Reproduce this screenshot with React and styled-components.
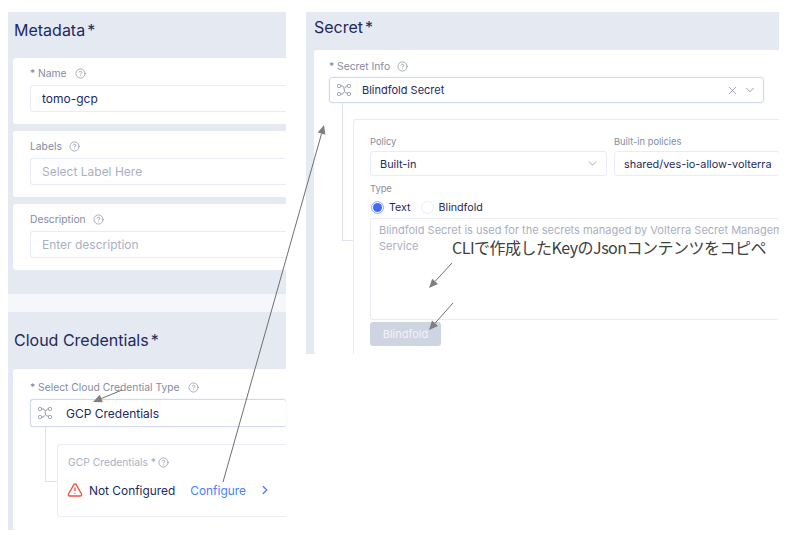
import React from "react";
import styled, { createGlobalStyle } from "styled-components";
import { ChevronDown, ChevronRight, CircleHelp, TriangleAlert, X } from "lucide-react";

const GlobalStyle = createGlobalStyle`
  html, body {
    margin: 0;
    background: #fff;
  }
  body {
    font-family: Inter, "Liberation Sans", sans-serif;
    color: #1f2a5c;
  }
`;

const Page = styled.div`
  position: relative;
  width: 794px;
  height: 545px;
  overflow: hidden;
  display: flex;
  align-items: flex-start;
  gap: 20px;
  padding: 12px 0 0 8px;
  box-sizing: border-box;
`;

const LeftColumn = styled.div`
  width: 278px;
  flex: none;
  display: flex;
  flex-direction: column;
`;

const Section = styled.section`
  background: #e5e9f2;
  padding-left: 5px;
  height: ${(p) => p.$height}px;
  box-sizing: border-box;
  display: flex;
  flex-direction: column;
  gap: 7px;
`;

const Strip = styled.div`
  height: 18px;
  background: #f6f7fa;
`;

const Heading = styled.h2`
  margin: 0 0 ${(p) => p.$bottom}px ${(p) => p.$left || 0}px;
  height: ${(p) => p.$height}px;
  display: flex;
  align-items: center;
  font-size: 16px;
  font-weight: 400;
  flex: none;
  color: #1f2a5c;
`;

const Star = styled.span`
  margin-left: 2px;
`;

const Card = styled.div`
  background: #fff;
  border-radius: 3px 0 0 3px;
  padding: ${(p) => p.$pad || "7px 0 0 17px"};
  height: ${(p) => p.$height}px;
  box-sizing: border-box;
  flex: none;
`;

const Label = styled.div`
  display: flex;
  align-items: center;
  gap: ${(p) => p.$gap || 7}px;
  height: 16px;
  font-size: 10.3px;
  color: #858ca2;
  margin-bottom: ${(p) => p.$bottom ?? 4}px;
`;

const Help = styled(CircleHelp).attrs({ size: 11, strokeWidth: 1.4 })`
  color: #7e859c;
  flex: none;
`;

const Input = styled.div`
  height: 27px;
  box-sizing: border-box;
  border: 1px solid #e9ecf4;
  border-right: none;
  border-radius: 3px 0 0 3px;
  padding-left: 11px;
  display: flex;
  align-items: center;
  font-size: 12px;
  color: ${(p) => (p.$placeholder ? "#a9afc2" : "#1f2a5c")};
`;

const Select = styled.div`
  height: ${(p) => p.$height}px;
  box-sizing: border-box;
  border: 1px solid #d3d9ec;
  border-right: ${(p) => (p.$open ? "none" : "1px solid #d3d9ec")};
  border-radius: 3px;
  width: ${(p) => p.$width}px;
  display: flex;
  align-items: center;
  padding: 0 6px 0 7px;
  font-size: ${(p) => p.$font}px;
  color: #1f2a5c;
  box-shadow: 0 0 2px #e3e6f2;
`;

const SelectText = styled.span`
  margin-left: ${(p) => p.$gap}px;
  flex: 1;
`;

const SelectIcons = styled.span`
  display: flex;
  align-items: center;
  gap: 4px;
  color: #8a90a6;
`;

const Branch = styled.div`
  margin-left: ${(p) => p.$left}px;
  border-left: 1px solid #dfe3f0;
  border-bottom: 1px solid #dfe3f0;
  width: ${(p) => p.$width}px;
  height: ${(p) => p.$height}px;
  box-sizing: border-box;
  flex: none;
`;

const Nested = styled.div`
  display: flex;
  align-items: flex-start;
`;

const SubCard = styled.div`
  flex: 1;
  margin-top: ${(p) => p.$top}px;
  border: 1px solid #e9ecf4;
  border-right: none;
  border-bottom: ${(p) => (p.$open ? "none" : "1px solid #e9ecf4")};
  border-radius: 3px 0 0 3px;
  height: ${(p) => p.$height}px;
  box-sizing: border-box;
  padding: ${(p) => p.$pad};
  min-width: 0;
`;

const MutedLabel = styled.div`
  display: flex;
  align-items: center;
  gap: 2px;
  font-size: 10.3px;
  color: #a9afc2;
  height: 16px;
`;

const StatusRow = styled.div`
  display: flex;
  align-items: center;
  margin-top: 12px;
  font-size: 11.9px;
`;

const WarningIcon = styled(TriangleAlert)`
  margin-left: -1px;
  color: #f0503c;
`;

const StatusText = styled.span`
  margin-left: 6px;
  color: #1f2a5c;
`;

const ConfigureLink = styled.span`
  margin-left: 15px;
  color: #4d7cfe;
`;

const ArrowLink = styled(ChevronRight)`
  margin-left: 12px;
  color: #4d7cfe;
`;

const RightColumn = styled.section`
  width: 473px;
  height: 342px;
  flex: none;
  background: #e5e9f2;
  padding-left: 8px;
  box-sizing: border-box;
  overflow: hidden;
  display: flex;
  flex-direction: column;
`;

const FormGrid = styled.div`
  display: grid;
  grid-template-columns: 237px 1fr;
  column-gap: 7px;
`;

const FieldLabel = styled.div`
  font-size: 9.3px;
  color: #858ca2;
  height: 14px;
  display: flex;
  align-items: center;
  margin: ${(p) => p.$margin || "0 0 3px"};
`;

const FieldBox = styled.div`
  height: 25px;
  box-sizing: border-box;
  border: 1px solid #e9ecf4;
  border-radius: 3px;
  display: flex;
  align-items: center;
  justify-content: space-between;
  padding: 0 7px 0 9px;
  font-size: 10.9px;
  color: #1f2a5c;
  white-space: nowrap;
  overflow: hidden;
`;

const RadioRow = styled.div`
  display: flex;
  align-items: center;
  height: 16px;
  font-size: 10.7px;
  color: #1f2a5c;
`;

const Radio = styled.span`
  width: 13px;
  height: 13px;
  box-sizing: border-box;
  border-radius: 50%;
  border: 1px solid ${(p) => (p.$on ? "#8ea8fb" : "#eceef5")};
  margin: ${(p) => p.$margin};
  display: flex;
  align-items: center;
  justify-content: center;
  &::after {
    content: "";
    width: 9px;
    height: 9px;
    border-radius: 50%;
    background: ${(p) => (p.$on ? "#4368f7" : "transparent")};
  }
`;

const TextArea = styled.div`
  margin-top: 3px;
  height: 102px;
  box-sizing: border-box;
  border: 1px solid #e9ecf4;
  border-right: none;
  border-radius: 3px;
  padding: 3px 0 0 8px;
  font-size: 11px;
  line-height: 16px;
  color: #a9afc2;
  white-space: nowrap;
  overflow: hidden;
`;

const BlindfoldButton = styled.div`
  margin-top: 2px;
  width: 71px;
  height: 24px;
  border-radius: 3px;
  background: #ced4e2;
  color: #f1f3f8;
  font-size: 11px;
  display: flex;
  align-items: center;
  justify-content: center;
`;

const Annotation = styled.div`
  position: absolute;
  left: 452px;
  top: 236px;
  font-family: "Noto Sans CJK JP", sans-serif;
  font-size: 16px;
  line-height: 22px;
  letter-spacing: -0.5px;
  color: #404040;
  white-space: nowrap;
`;

const Arrows = styled.svg`
  position: absolute;
  left: 0;
  top: 0;
  pointer-events: none;
`;

const ShuffleIcon = ({ size = 14 }) => (
  <svg width={size} height={size} viewBox="0 0 14 14" fill="none" stroke="#8a90a6" strokeWidth="1">
    <rect x="0.5" y="1.5" width="3" height="3" rx="1" />
    <rect x="0.5" y="9.5" width="3" height="3" rx="1" />
    <rect x="10.5" y="1.5" width="3" height="3" rx="1" />
    <rect x="10.5" y="9.5" width="3" height="3" rx="1" />
    <path d="M3.5 3h1.5c1.2 0 1.6.7 2 2l.3 2c.3 2 1 3 2.200 3h1M3.500 11h1.500c1 0 1.500-.7 1.900-1.800M8 5c.4-1.200 1-2 2-2h.5" />
  </svg>
);

const Arrow = ({ x1, y1, x2, y2 }) => {
  const angle = Math.atan2(y2 - y1, x2 - x1);
  const len = 9;
  const wing = 4;
  const bx = x2 - len * Math.cos(angle);
  const by = y2 - len * Math.sin(angle);
  const px = wing * Math.sin(angle);
  const py = wing * Math.cos(angle);
  return (
    <g>
      <line x1={x1} y1={y1} x2={bx} y2={by} stroke="#6f6f6f" strokeWidth="1" />
      <polygon points={`${x2},${y2} ${bx + px},${by - py} ${bx - px},${by + py}`} fill="#7f7f7f" />
    </g>
  );
};

export default function App() {
  return (
    <Page>
      <GlobalStyle />
      <LeftColumn>
        <Section $height={282}>
          <Heading $height={36} $bottom={3} $left={1}>
            Metadata<Star>*</Star>
          </Heading>
          <Card $height={66}>
            <Label $gap={8}>
              * Name <Help />
            </Label>
            <Input>tomo-gcp</Input>
          </Card>
          <Card $height={66}>
            <Label>
              Labels <Help />
            </Label>
            <Input $placeholder>Select Label Here</Input>
          </Card>
          <Card $height={66}>
            <Label>
              Description <Help />
            </Label>
            <Input $placeholder>Enter description</Input>
          </Card>
        </Section>
        <Strip />
        <Section $height={218}>
          <Heading $height={55} $bottom={-5} $left={1}>
            Cloud Credentials<Star>*</Star>
          </Heading>
          <Card $height={161} $pad="10px 0 0 17px">
            <Label $gap={8}>
              * Select Cloud Credential Type <Help />
            </Label>
            <Select $open $width={256} $height={28} $font={12}>
              <ShuffleIcon />
              <SelectText $gap={14}>GCP Credentials</SelectText>
            </Select>
            <Nested>
              <Branch $left={15} $width={12} $height={55} />
              <SubCard $top={17} $height={73} $pad="9px 0 0 10px">
                <MutedLabel>
                  GCP Credentials * <Help />
                </MutedLabel>
                <StatusRow>
                  <WarningIcon size={16} strokeWidth={2} />
                  <StatusText>Not Configured</StatusText>
                  <ConfigureLink>Configure</ConfigureLink>
                  <ArrowLink size={14} strokeWidth={2.2} />
                </StatusRow>
              </SubCard>
            </Nested>
          </Card>
        </Section>
      </LeftColumn>
      <RightColumn>
        <Heading $height={30} $bottom={8}>
          Secret<Star>*</Star>
        </Heading>
        <Card $height={304} $pad="8px 0 0 15px">
          <Label $gap={7} $bottom={3}>
            * Secret Info <Help />
          </Label>
          <Select $width={435} $height={26} $font={11}>
            <ShuffleIcon />
            <SelectText $gap={11}>Blindfold Secret</SelectText>
            <SelectIcons>
              <X size={13} strokeWidth={1.5} />
              <ChevronDown size={14} strokeWidth={1.5} />
            </SelectIcons>
          </Select>
          <Nested>
            <Branch $left={13} $width={11} $height={138} />
            <SubCard $open $top={16} $height={260} $pad="14px 0 0 16px">
              <FormGrid>
                <div>
                  <FieldLabel>Policy</FieldLabel>
                  <FieldBox>
                    Built-in
                    <ChevronDown size={13} color="#8a90a6" strokeWidth={1.5} />
                  </FieldBox>
                </div>
                <div>
                  <FieldLabel>Built-in policies</FieldLabel>
                  <FieldBox>shared/ves-io-allow-volterra</FieldBox>
                </div>
              </FormGrid>
              <FieldLabel $margin="5px 0 4px">Type</FieldLabel>
              <RadioRow>
                <Radio $on $margin="0 5px 0 1px" />
                Text
                <Radio $margin="0 5px 0 10px" />
                Blindfold
              </RadioRow>
              <TextArea>
                Blindfold Secret is used for the secrets managed by Volterra Secret Management
                <br />
                Service
              </TextArea>
              <BlindfoldButton>Blindfold</BlindfoldButton>
            </SubCard>
          </Nested>
        </Card>
      </RightColumn>
      <Annotation>CLIで作成したKeyのJsonコンテンツをコピペ</Annotation>
      <Arrows width="794" height="545">
        <Arrow x1={223} y1={482} x2={324} y2={125} />
        <Arrow x1={122} y1={390} x2={93} y2={402} />
        <Arrow x1={452} y1={263} x2={429} y2={288} />
        <Arrow x1={453} y1={303} x2={429} y2={330} />
      </Arrows>
    </Page>
  );
}
